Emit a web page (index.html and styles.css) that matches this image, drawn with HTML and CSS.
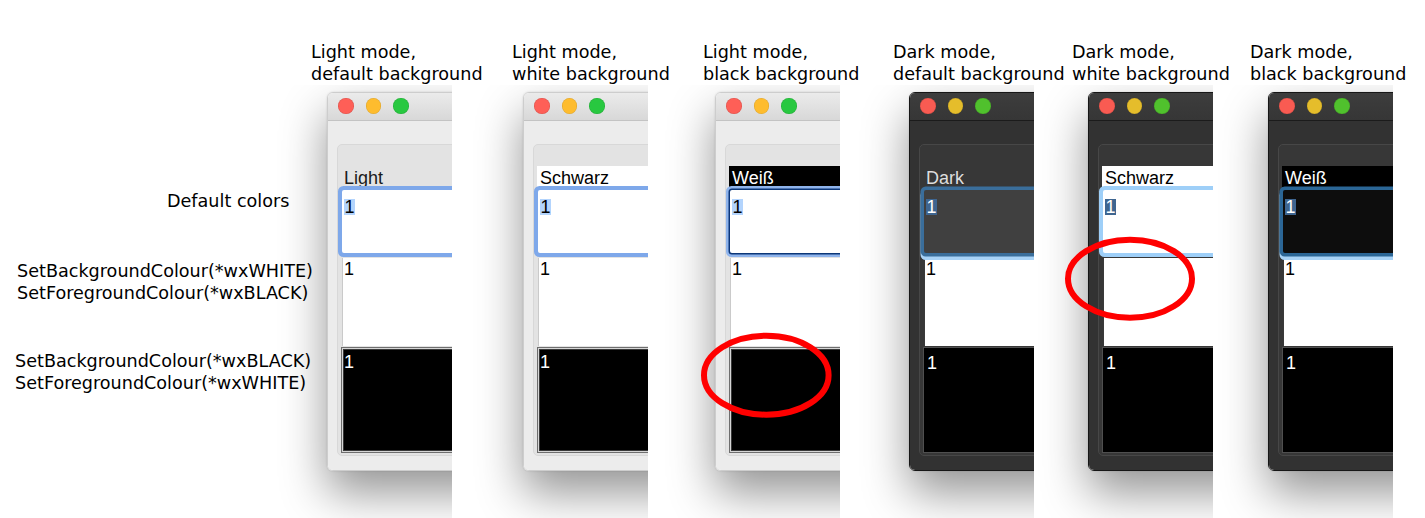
FILE: index.html
```html
<!DOCTYPE html>
<html>
<head>
<meta charset="utf-8">
<link rel="stylesheet" href="styles.css">
</head>
<body>
<div class="page">
  <div class="labels">
    <div class="rowlbl rl1">Default colors</div>
    <div class="rowlbl rl2">SetBackgroundColour(*wxWHITE)<br>SetForegroundColour(*wxBLACK)</div>
    <div class="rowlbl rl3">SetBackgroundColour(*wxBLACK)<br>SetForegroundColour(*wxWHITE)</div>
  </div>

  <div class="panel p1">
    <div class="heading">Light mode,<br>default background</div>
    <div class="shot">
      <div class="win light">
        <div class="titlebar"><span class="tl red"></span><span class="tl yellow"></span><span class="tl green"></span></div>
        <div class="wbody">
          <div class="group">
            <div class="label">Light</div>
            <div class="field f1"><span class="sel">1</span></div>
            <div class="field f2">1</div>
            <div class="field f3">1</div>
          </div>
        </div>
      </div>
    </div>
  </div>

  <div class="panel p2">
    <div class="heading">Light mode,<br>white background</div>
    <div class="shot">
      <div class="win light">
        <div class="titlebar"><span class="tl red"></span><span class="tl yellow"></span><span class="tl green"></span></div>
        <div class="wbody">
          <div class="group">
            <div class="label label-white">Schwarz</div>
            <div class="field f1"><span class="sel">1</span></div>
            <div class="field f2">1</div>
            <div class="field f3">1</div>
          </div>
        </div>
      </div>
    </div>
  </div>

  <div class="panel p3">
    <div class="heading">Light mode,<br>black background</div>
    <div class="shot">
      <div class="win light">
        <div class="titlebar"><span class="tl red"></span><span class="tl yellow"></span><span class="tl green"></span></div>
        <div class="wbody">
          <div class="group">
            <div class="label label-black">Weiß</div>
            <div class="field f1 f1-navy"><span class="sel">1</span></div>
            <div class="field f2">1</div>
            <div class="field f3"></div>
          </div>
        </div>
      </div>
      <svg class="mark" viewBox="0 0 192 433" width="192" height="433"><ellipse cx="118.3" cy="290.2" rx="62.3" ry="39.5" fill="none" stroke="#ff0000" stroke-width="6"/></svg>
    </div>
  </div>

  <div class="panel p4">
    <div class="heading">Dark mode,<br>default background</div>
    <div class="shot">
      <div class="win dark">
        <div class="titlebar"><span class="tl red"></span><span class="tl yellow"></span><span class="tl green"></span></div>
        <div class="wbody">
          <div class="group">
            <div class="label">Dark</div>
            <div class="field f1"><span class="sel">1</span></div>
            <div class="field f2">1</div>
            <div class="field f3">1</div>
          </div>
        </div>
      </div>
    </div>
  </div>

  <div class="panel p5">
    <div class="heading">Dark mode,<br>white background</div>
    <div class="shot">
      <div class="win dark">
        <div class="titlebar"><span class="tl red"></span><span class="tl yellow"></span><span class="tl green"></span></div>
        <div class="wbody">
          <div class="group">
            <div class="label label-white">Schwarz</div>
            <div class="field f1 f1-white"><span class="sel">1</span></div>
            <div class="field f2"></div>
            <div class="field f3">1</div>
          </div>
        </div>
      </div>
      <svg class="mark" viewBox="0 0 179 433" width="179" height="433"><ellipse cx="96" cy="193.7" rx="62" ry="39" fill="none" stroke="#ff0000" stroke-width="6"/></svg>
    </div>
  </div>

  <div class="panel p6">
    <div class="heading">Dark mode,<br>black background</div>
    <div class="shot">
      <div class="win dark">
        <div class="titlebar"><span class="tl red"></span><span class="tl yellow"></span><span class="tl green"></span></div>
        <div class="wbody">
          <div class="group">
            <div class="label label-black">Weiß</div>
            <div class="field f1 f1-black"><span class="sel">1</span></div>
            <div class="field f2">1</div>
            <div class="field f3">1</div>
          </div>
        </div>
      </div>
    </div>
  </div>
</div>
</body>
</html>
```

FILE: styles.css
```css
* { box-sizing: border-box; }
html, body { margin: 0; padding: 0; background: #ffffff; }
body { width: 1425px; height: 518px; overflow: hidden; }

.page {
  display: flex;
  align-items: flex-start;
  height: 518px;
  font-family: "DejaVu Sans", sans-serif;
  font-size: 17.6px;
  line-height: 22px;
  color: #000;
}

/* row labels */
.labels {
  width: 267px;
  flex: none;
  display: flex;
  flex-direction: column;
  padding-top: 190px;
}
.rowlbl { white-space: nowrap; }
.rl1 { margin-left: 167px; }
.rl2 { margin-left: 17px; margin-top: 48px; }
.rl3 { margin-left: 15px; margin-top: 46px; }

/* panels */
.panel {
  flex: none;
  display: flex;
  flex-direction: column;
}
.heading {
  width: 0;
  height: 85px;
  padding-top: 41px;
  white-space: nowrap;
}
.shot {
  position: relative;
  height: 433px;
  overflow: hidden;
}
.mark {
  position: absolute;
  left: 0;
  top: 0;
}

.p1 { width: 185px; }
.p1 .shot { width: 185px; padding-left: 60px; }
.p1 .heading { margin-left: 44px; }
.p2 { width: 196px; }
.p2 .shot { width: 196px; padding-left: 71px; }
.p2 .heading { margin-left: 60px; }
.p3 { width: 192px; }
.p3 .shot { width: 192px; padding-left: 67px; }
.p3 .heading { margin-left: 55px; }
.p4 { width: 194px; }
.p4 .shot { width: 194px; padding-left: 69px; }
.p4 .heading { margin-left: 53px; }
.p5 { width: 179px; }
.p5 .shot { width: 179px; padding-left: 54px; }
.p5 .heading { margin-left: 38px; }
.p6 { width: 180px; }
.p6 .shot { width: 180px; padding-left: 55px; }
.p6 .heading { margin-left: 37px; }

/* window */
.win {
  width: 220px;
  height: 379px;
  margin-top: 7px;
  border-radius: 6px;
  border: 1px solid #cdcdcd;
  box-shadow: 0 22px 46px rgba(0, 0, 0, 0.42), 0 0 2px rgba(0, 0, 0, 0.15);
  font-family: "Liberation Sans", Arial, sans-serif;
  font-size: 18px;
  overflow: hidden;
}
.titlebar {
  height: 28px;
  display: flex;
  align-items: center;
  gap: 12px;
  padding-left: 10px;
  padding-bottom: 1px;
  border-bottom: 1px solid #c3c3c3;
  background: linear-gradient(#ebebeb, #d8d8d8);
}
.tl {
  width: 15.5px;
  height: 15.5px;
  border-radius: 50%;
  flex: none;
  box-shadow: inset 0 0 0 0.6px rgba(0, 0, 0, 0.12);
}
.light .red { background: #fe5f57; }
.light .yellow { background: #febc2e; }
.light .green { background: #28c840; }

.wbody {
  height: 350px;
  padding: 23px 0 0 9px;
  background: #ececec;
}
.group {
  height: 312px;
  border: 1px solid #d8d8d8;
  border-radius: 5px;
  background: #e3e3e3;
  padding: 21px 0 0 3px;
  display: flex;
  flex-direction: column;
}
.label {
  height: 21px;
  line-height: 21px;
  padding: 2px 0 0 3px;
  color: #1a1a1a;
  white-space: nowrap;
}
.label-white { background: #ffffff; color: #000; }
.label-black { background: #000000; color: #ffffff; }

.field { flex: none; white-space: nowrap; }

.f1 {
  position: relative;
  height: 63px;
  margin: 3px 0 0 1px;
  padding: 9px 0 0 2px;
  line-height: 16px;
  background: #ffffff;
  border-radius: 2px;
  box-shadow: 0 0 0 4px #7ea8ea;
  color: #000;
}
.sel {
  display: inline-block;
  height: 16px;
  line-height: 16px;
  padding: 0 0.5px;
  background: #b3d4fd;
}
.f1-navy { box-shadow: 0 0 0 1.5px #0c3678, 0 0 0 4px #8fb4ec; }

.f2 {
  height: 88px;
  margin: 5px 0 0 1px;
  padding: 3px 0 0 1px;
  line-height: 17px;
  background: #ffffff;
  border-left: 1px solid #cacaca;
  color: #000;
}
.f3 {
  height: 106px;
  margin: 1px 0 0 0;
  padding: 6px 0 0 2px;
  line-height: 17px;
  background: #000000;
  border: 1px solid #6e6e6e;
  box-shadow: inset 0 0 0 1px #d6d6d6, inset 0 0 0 2px #3a3a3a;
  color: #ffffff;
}

/* dark windows */
.dark { border-color: #161616; }
.dark .titlebar {
  background: linear-gradient(#3d3d3d, #363636);
  border-bottom-color: #1b1b1b;
}
.dark .red { background: #f95b52; }
.dark .yellow { background: #e5bd2b; }
.dark .green { background: #50c12d; }
.dark .wbody { background: #323232; }
.dark .group { background: #373737; border-color: #474747; }
.dark .label { color: #dedede; }
.dark .label-white { color: #000; }
.dark .label-black { color: #fff; }
.dark .f1 {
  background: #404040;
  color: #ffffff;
  box-shadow: 0 0 0 3.5px #3a6e9b, 0 3.5px 0 3.5px #a8d3f7;
}
.dark .sel { background: #3e6590; }
.dark .f1-white { background: #ffffff; box-shadow: 0 0 0 4px #9ecff8; }
.dark .f1-black { background: #0d0d0d; box-shadow: 0 0 0 3.5px #2b6696, 0 3.5px 0 3.5px #a8d3f7; }
.dark .f2 { border-left-color: #3a3a3a; }
.dark .f3 { border-color: #4f4f4f; box-shadow: none; padding-top: 7px; padding-left: 3px; }
```
